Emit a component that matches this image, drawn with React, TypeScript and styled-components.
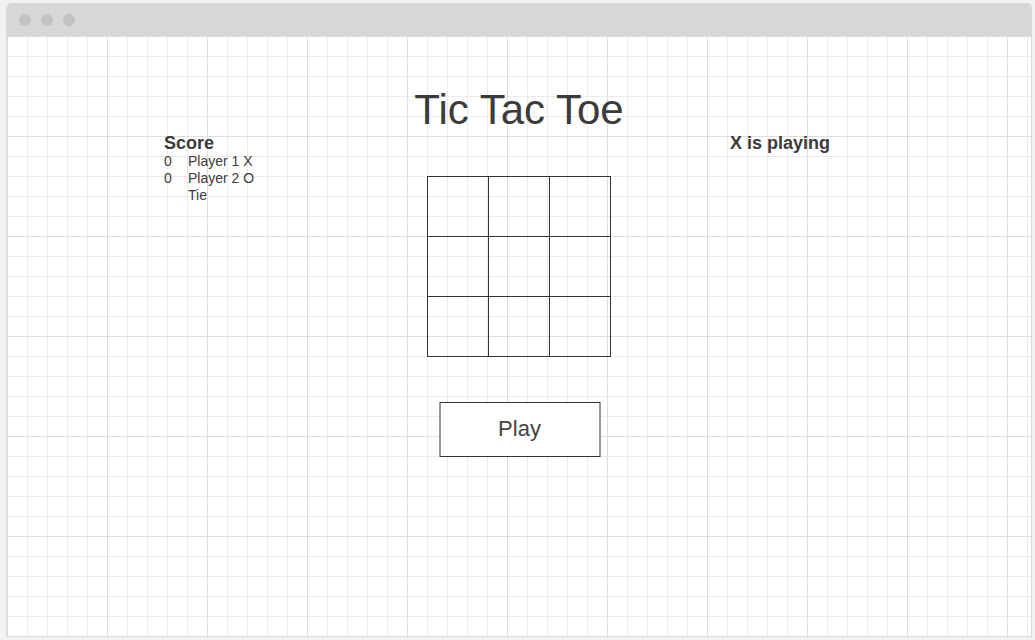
import React from "react";
import styled, { createGlobalStyle } from "styled-components";

const Global = createGlobalStyle`
  html, body { margin: 0; padding: 0; background: #f2f2f2; }
  body { font-family: "Liberation Sans", Arial, sans-serif; color: #3b3b3b; }
  * { box-sizing: border-box; }
`;

const Page = styled.div`
  width: 1035px;
  height: 640px;
  padding: 3px 4px 3px 6px;
  background: #f2f2f2;
`;

const Window = styled.div`
  width: 1026px;
  height: 634px;
  display: flex;
  flex-direction: column;
  border: 1px solid #dadada;
  border-top: none;
  border-radius: 5px 5px 0 0;
  overflow: hidden;
  background: #fff;
`;

const TitleBar = styled.div`
  height: 33px;
  flex: none;
  background: #d7d7d7;
  display: flex;
  align-items: center;
  gap: 10px;
  padding-left: 12px;
`;

const Dot = styled.span`
  width: 12px;
  height: 12px;
  border-radius: 50%;
  background: #c2c2c2;
`;

const Canvas = styled.div`
  flex: 1;
  background-color: #fff;
  background-image:
    linear-gradient(to right, #dedede 1px, transparent 1px),
    linear-gradient(to bottom, #dedede 1px, transparent 1px),
    linear-gradient(to right, #ebebeb 1px, transparent 1px),
    linear-gradient(to bottom, #ebebeb 1px, transparent 1px);
  background-size: 100px 100px, 100px 100px, 20px 20px, 20px 20px;
  display: flex;
  flex-direction: column;
`;

const Title = styled.h1`
  margin: 50px 0 0;
  font-size: 42px;
  line-height: 48px;
  font-weight: 400;
  text-align: center;
  color: #3b3b3b;
`;

const GameRow = styled.div`
  display: grid;
  grid-template-columns: 263px 184px 1fr;
  padding-left: 157px;
`;

const ScorePanel = styled.div`
  display: flex;
  flex-direction: column;
`;

const PanelHeading = styled.div`
  font-size: 18px;
  font-weight: 700;
  line-height: 19px;
  color: #3b3b3b;
`;

const ScoreRow = styled.div`
  display: grid;
  grid-template-columns: 24px auto;
  font-size: 14px;
  line-height: 17px;
  color: #3b3b3b;
`;

const Status = styled(PanelHeading)`
  padding-left: 119px;
`;

const Center = styled.div`
  display: flex;
  flex-direction: column;
  align-items: center;
  padding-top: 42px;
`;

const Board = styled.div`
  display: grid;
  grid-template-columns: repeat(3, 61px);
  grid-template-rows: repeat(3, 60px);
  border: 1px solid #333;
  width: 184px;
  height: 181px;
  border-right: none;
  border-bottom: none;
`;

const Cell = styled.div`
  border-right: 1px solid #333;
  border-bottom: 1px solid #333;
`;

const PlayButton = styled.button`
  margin-top: 45px;
  width: 161px;
  height: 55px;
  border: 1px solid #333;
  background: #fff;
  font-family: "Liberation Sans", Arial, sans-serif;
  font-size: 22px;
  color: #444;
  padding: 0 0 2px;
  transform: translateX(0.5px);
`;

export default function App() {
  const cells = Array.from({ length: 9 });
  return (
    <>
      <Global />
      <Page>
        <Window>
          <TitleBar>
            <Dot />
            <Dot />
            <Dot />
          </TitleBar>
          <Canvas>
            <Title>Tic Tac Toe</Title>
            <GameRow>
              <ScorePanel>
                <PanelHeading>Score</PanelHeading>
                <ScoreRow>
                  <span>0</span>
                  <span>Player 1 X</span>
                </ScoreRow>
                <ScoreRow>
                  <span>0</span>
                  <span>Player 2 O</span>
                </ScoreRow>
                <ScoreRow>
                  <span></span>
                  <span>Tie</span>
                </ScoreRow>
              </ScorePanel>
              <Center>
                <Board>
                  {cells.map((_, i) => (
                    <Cell key={i} />
                  ))}
                </Board>
                <PlayButton>Play</PlayButton>
              </Center>
              <Status>X is playing</Status>
            </GameRow>
          </Canvas>
        </Window>
      </Page>
    </>
  );
}
